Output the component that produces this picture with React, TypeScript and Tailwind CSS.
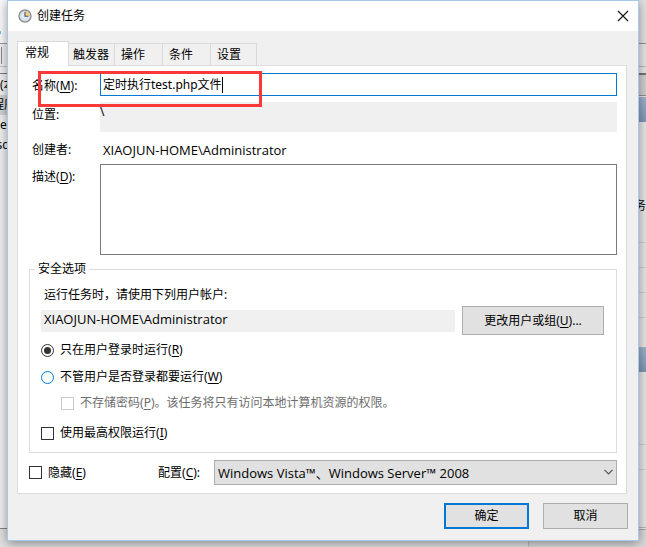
import { useState } from "react";
import type { ReactNode } from "react";
import clsx from "clsx";

const tabs = [
  { name: "常规", size: "w-[52px] pl-[7px]" },
  { name: "触发器", size: "w-[46px] pl-1" },
  { name: "操作", size: "w-[48px] pl-[6px]" },
  { name: "条件", size: "w-[48px] pl-[6px]" },
  { name: "设置", size: "w-[46px] pl-[6px]" },
];

function Key({ children }: { children: string }) {
  return (
    <>
      (<u className="underline-offset-2">{children}</u>)
    </>
  );
}

function Line({ gap, color = "bg-[#cfcfcf]" }: { gap: string; color?: string }) {
  return (
    <>
      <div className={clsx("shrink-0", gap)} />
      <div className={clsx("h-px shrink-0", color)} />
    </>
  );
}

function BackWindow() {
  return (
    <div aria-hidden="true" className="absolute inset-0 flex justify-between overflow-hidden bg-[#dedede]">
      <div className="flex w-[8px] flex-col overflow-hidden whitespace-nowrap bg-[#f0f0f0]">
        <div className="h-[43px] shrink-0 bg-[#fafafa]">
          <div className="h-[31px]" />
          <div className="h-[3px] w-px bg-[#5bc8ee]" />
        </div>
        <div className="h-px shrink-0 bg-[#9a9a9a]" />
        <div className="flex h-[22px] shrink-0 items-center">
          <div className="ml-px h-[17px] w-px bg-[#8a8a8a]" />
        </div>
        <div className="h-px shrink-0 bg-[#c4c4c4]" />
        <div className="h-[6px] shrink-0" />
        <div className="h-px shrink-0 bg-[#7c7c7c]" />
        <div className="h-[21px] shrink-0 leading-[21px]">(本</div>
        <div className="-ml-2 h-[20px] shrink-0 bg-[#d2d2d2] leading-[20px]">程序</div>
        <div className="h-[20px] shrink-0 leading-[20px]">e</div>
        <div className="flex h-[20px] shrink-0 justify-end leading-[20px]">sc</div>
        <div className="h-[373px] shrink-0" />
        <div className="h-px shrink-0 bg-[#85858d]" />
        <div className="grow bg-[#e0e0e0]" />
      </div>
      <div className="flex w-[118px] flex-col overflow-hidden whitespace-nowrap bg-[#e6e6e6]">
        <Line gap="h-[43px] bg-[#e2e2e2]" color="bg-[#8f8f8f]" />
        <Line gap="h-[22px]" color="bg-[#bdbdbd]" />
        <div className="h-[6px] shrink-0" />
        <div className="h-[2px] shrink-0 bg-[#757575]" />
        <Line gap="h-[20px] bg-[#cfcfcf]" color="bg-[#8f8f8f]" />
        <div className="h-px shrink-0" />
        <div className="h-[25px] shrink-0 bg-linear-to-b from-[#9cb2cd] to-[#7f97b4]" />
        <div className="h-[76px] shrink-0" />
        <div className="flex h-[16px] shrink-0 justify-end leading-[16px]">任务</div>
        <Line gap="h-[28px]" />
        <Line gap="h-[24px]" />
        <Line gap="h-[24px]" />
        <Line gap="h-[24px]" />
        <div className="h-[29px] shrink-0" />
        <div className="h-[25px] shrink-0 bg-linear-to-b from-[#9cb2cd] to-[#7f97b4]" />
        <Line gap="h-[72px]" />
        <Line gap="h-[24px]" />
        <Line gap="h-[57px]" color="bg-[#b8b8b8]" />
        <div className="h-px shrink-0" />
        <div className="h-px shrink-0 bg-[#a8a8a8]" />
        <div className="grow border-l border-[#bcbcbc] bg-[#d8d8d8]" />
      </div>
    </div>
  );
}

function ClockIcon() {
  return (
    <svg className="size-[14px]" viewBox="0 0 14 14" aria-hidden="true">
      <circle cx="7" cy="7" r="6" fill="#dce9f2" stroke="#8c8c8c" strokeWidth="1.4" />
      <path d="M7 7V2a5 5 0 0 1 5 5z" fill="#f5cf86" />
      <circle cx="7" cy="7" r="5" fill="none" stroke="#b9c3ca" strokeWidth=".6" />
      <path d="M7 3v4.3h3.4" fill="none" stroke="#4d545a" strokeWidth="1.1" />
    </svg>
  );
}

const boxStyle = "size-[13px] shrink-0 appearance-none border bg-white checked:bg-[#333]";
const radioStyle =
  "size-[13px] shrink-0 appearance-none rounded-full border bg-white p-[2px] bg-clip-content";
const buttonStyle = "border-[#adadad] bg-[#e1e1e1]";
const latinStyle = "font-['Open_Sans','Noto_Sans_CJK_SC',sans-serif] text-[13px]";

function Choice({ className, children }: { className?: string; children: ReactNode }) {
  return <label className={clsx("flex h-4 items-center gap-[6px]", className)}>{children}</label>;
}

export default function App() {
  const [name, setName] = useState("定时执行test.php文件");
  const [runMode, setRunMode] = useState("loggedOn");

  return (
    <div className="relative min-h-screen px-[7px] font-['Noto_Sans','Noto_Sans_CJK_SC',sans-serif] text-[12px] leading-4 text-black">
      <BackWindow />
      <main className="relative border border-[#a9c8e8] bg-[#f0f0f0] shadow-[0_2px_10px_rgba(0,0,0,0.4)]">
        <header className="flex h-[30px] items-center bg-white pr-[9px] pl-[10px]">
          <ClockIcon />
          <h1 className="ml-[5px] grow">创建任务</h1>
          <button type="button" aria-label="关闭">
            <svg className="size-[12px]" viewBox="0 0 12 12" fill="none" stroke="#111" strokeWidth="1.1">
              <path d="M1 1l10 10M11 1L1 11" />
            </svg>
          </button>
        </header>

        <div className="px-[9px] pt-[10px] pb-[11px]">
          <div role="tablist" className="flex h-6 items-end">
            {tabs.map((tab, i) => (
              <button
                key={tab.name}
                type="button"
                role="tab"
                aria-selected={i === 0}
                className={clsx(
                  "border-[#d9d9d9] text-left",
                  tab.size,
                  i === 0
                    ? "relative z-10 -mb-px h-[25px] border-x border-t bg-white pb-[2px]"
                    : "h-[22px] border-t border-r",
                )}
              >
                {tab.name}
              </button>
            ))}
          </div>

          <section className="mr-[2px] border border-[#dcdcdc] bg-white pt-[7px] pr-[9px] pb-2 pl-[11px]">
            <div className="relative flex">
              <label htmlFor="name" className="w-[71px] shrink-0 pt-[5px] pl-[3px]">
                名称
                <Key>M</Key>:
              </label>
              <div className="flex h-[23px] grow items-center border border-[#0078d7] pl-[2px]">
                <input
                  id="name"
                  value={name}
                  onChange={(e) => setName(e.target.value)}
                  className="[field-sizing:content] outline-none"
                />
                <span className="h-4 w-px bg-black" />
              </div>
              <div className="pointer-events-none absolute top-[-2px] left-[9px] h-[36px] w-[224px] border-3 border-[#fb3838]" />
            </div>

            <div className="mt-[6px] flex">
              <span className="w-[71px] shrink-0 pt-[5px] pl-[3px]">位置:</span>
              <div className="h-[30px] grow bg-[#f0f0f0] pt-[2px]">\</div>
            </div>

            <div className="mt-[10px] flex">
              <span className="w-[71px] shrink-0 pl-[3px]">创建者:</span>
              <span className={clsx("pl-[3px]", latinStyle)}>XIAOJUN-HOME\Administrator</span>
            </div>

            <div className="mt-[6px] flex">
              <label htmlFor="description" className="w-[71px] shrink-0 pt-[5px] pl-[3px]">
                描述
                <Key>D</Key>:
              </label>
              <textarea
                id="description"
                className="h-[91px] grow resize-none border border-[#7a7a7a] px-1 outline-none"
              />
            </div>

            <fieldset className="mt-[6px] border border-[#dcdcdc] pr-3 pb-[11px] pl-[11px]">
              <legend className="-ml-[6px] px-[3px]">安全选项</legend>
              <p className="mt-[10px] pl-[3px]">运行任务时，请使用下列用户帐户:</p>
              <div className="mt-[3px] flex items-center gap-[7px]">
                <div className={clsx("h-[22px] grow bg-[#f0f0f0] pt-px pl-[3px]", latinStyle)}>
                  XIAOJUN-HOME\Administrator
                </div>
                <button type="button" className={clsx(buttonStyle, "h-[29px] w-[142px] border")}>
                  更改用户或组
                  <Key>U</Key>...
                </button>
              </div>
              <Choice className="mt-[7px]">
                <input
                  type="radio"
                  name="run"
                  checked={runMode === "loggedOn"}
                  onChange={() => setRunMode("loggedOn")}
                  className={clsx(radioStyle, "border-[#333] checked:bg-[#333]")}
                />
                <span>
                  只在用户登录时运行
                  <Key>R</Key>
                </span>
              </Choice>
              <Choice className="mt-[11px]">
                <input
                  type="radio"
                  name="run"
                  checked={runMode === "always"}
                  onChange={() => setRunMode("always")}
                  className={clsx(radioStyle, "border-[#0078d7] checked:bg-[#0078d7]")}
                />
                <span>
                  不管用户是否登录都要运行
                  <Key>W</Key>
                </span>
              </Choice>
              <Choice className="mt-[10px] ml-5 text-[#6d6d6d]">
                <input type="checkbox" disabled className={clsx(boxStyle, "border-[#cccccc]")} />
                <span>
                  不存储密码
                  <Key>P</Key>。该任务将只有访问本地计算机资源的权限。
                </span>
              </Choice>
              <Choice className="mt-[14px]">
                <input type="checkbox" className={clsx(boxStyle, "border-[#333]")} />
                <span>
                  使用最高权限运行
                  <Key>I</Key>
                </span>
              </Choice>
            </fieldset>

            <div className="mt-[7px] flex items-center">
              <Choice className="w-[129px] shrink-0">
                <input type="checkbox" className={clsx(boxStyle, "border-[#333]")} />
                <span>
                  隐藏
                  <Key>E</Key>
                </span>
              </Choice>
              <label htmlFor="configure" className="w-[56px] shrink-0">
                配置
                <Key>C</Key>:
              </label>
              <div className="relative grow">
                <select
                  id="configure"
                  className={clsx(buttonStyle, latinStyle, "block h-[25px] w-full appearance-none border pl-[3px]")}
                >
                  <option>Windows Vista™、Windows Server™ 2008</option>
                </select>
                <svg
                  className="pointer-events-none absolute top-[9px] right-1 h-[6px] w-[9px]"
                  viewBox="0 0 9 6"
                  fill="none"
                  stroke="#555"
                  strokeWidth="1.2"
                >
                  <path d="M.5.8l4 4 4-4" />
                </svg>
              </div>
            </div>
          </section>

          <footer className="mt-[9px] flex justify-end gap-[14px] pr-px">
            <button type="button" className="h-[26px] w-[85px] border-2 border-[#0078d7] bg-[#e1e1e1]">
              确定
            </button>
            <button type="button" className={clsx(buttonStyle, "h-[26px] w-[85px] border")}>
              取消
            </button>
          </footer>
        </div>
      </main>
    </div>
  );
}
